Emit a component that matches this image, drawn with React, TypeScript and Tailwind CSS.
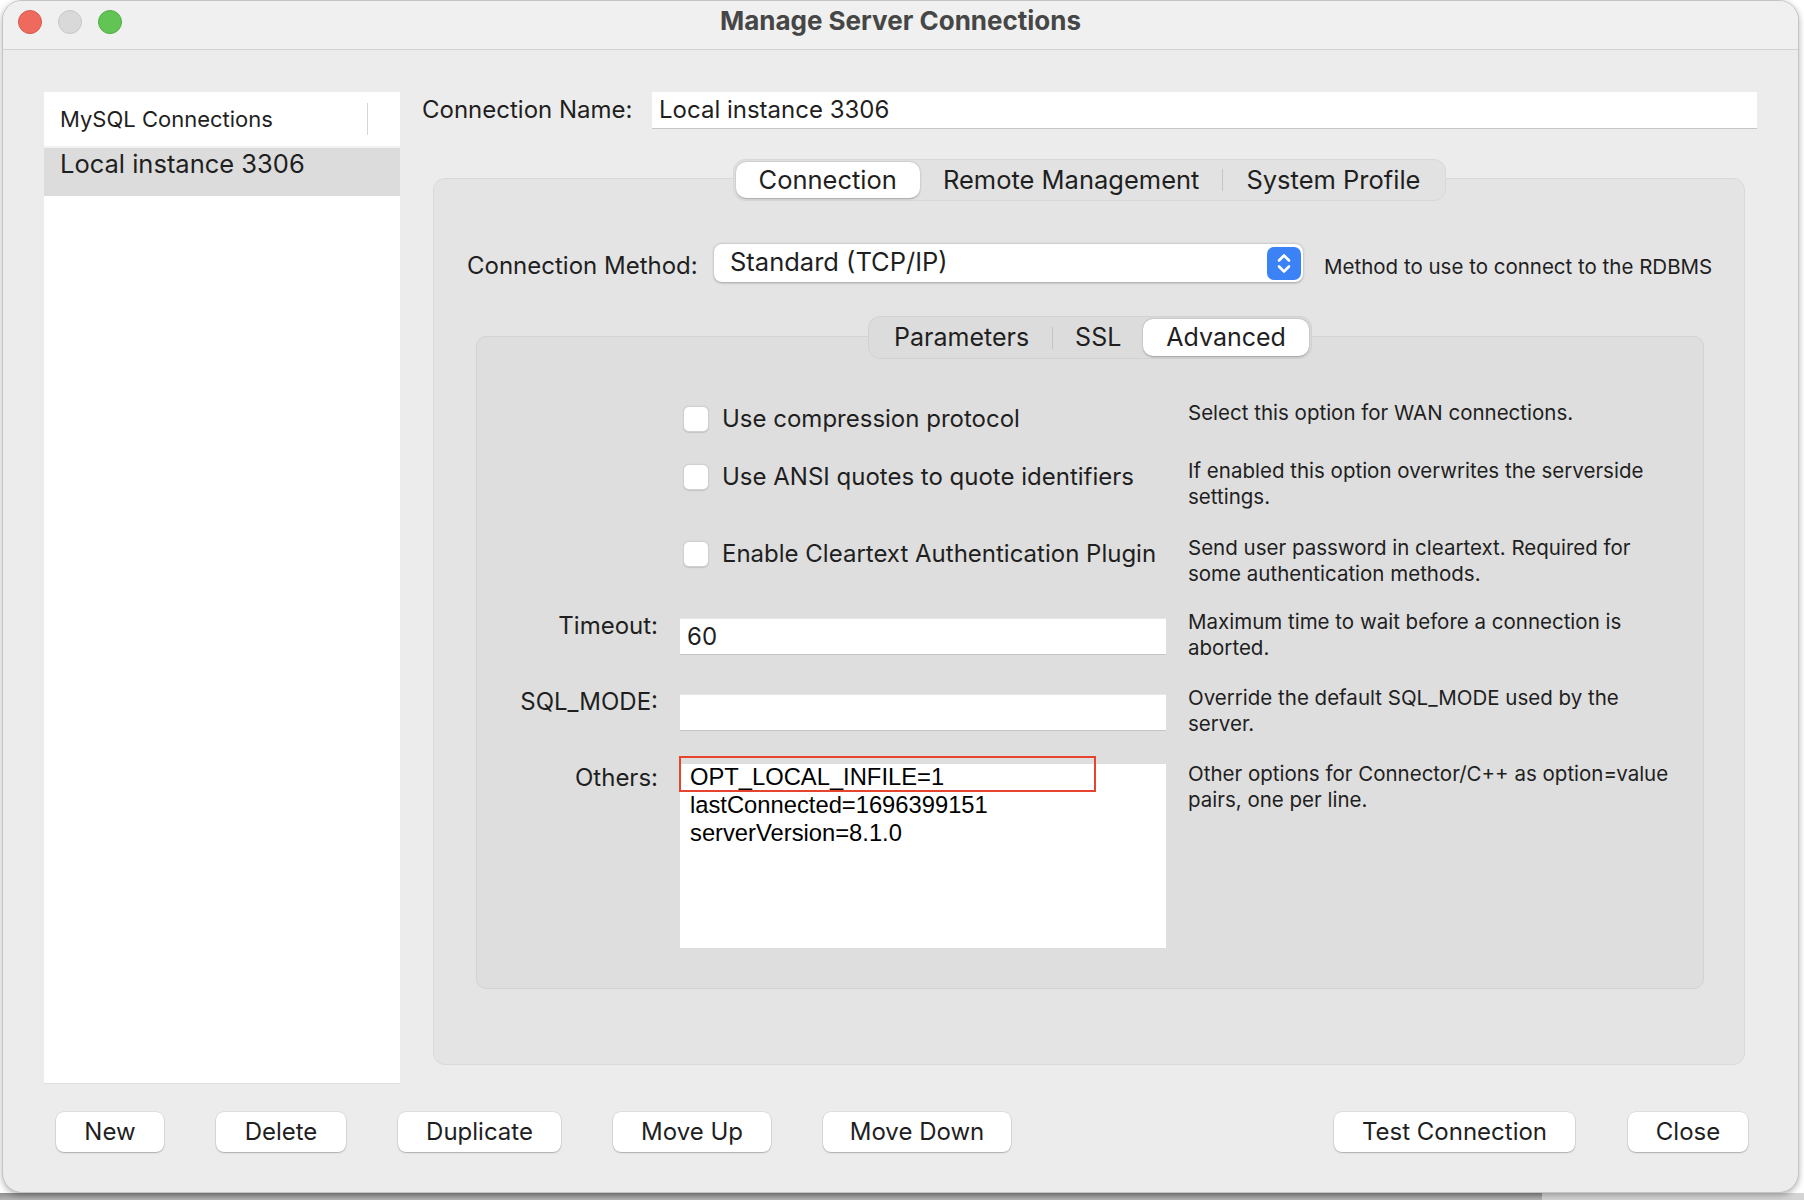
import React from "react";

function Checkbox() {
  return (
    <span className="ml-[3px] w-[26px] h-[26px] shrink-0 rounded-[6px] bg-white border border-[#d0d0d0] shadow-[0_0.5px_1px_rgba(0,0,0,0.12)]" />
  );
}

function Desc({ children, className = "" }: { children: React.ReactNode; className?: string }) {
  return (
    <div className={"text-[20.5px] leading-[26px] whitespace-nowrap text-[#1f1f1f] " + className}>
      {children}
    </div>
  );
}

function Btn({ label, w }: { label: string; w: string }) {
  return (
    <div
      className={
        "h-[40px] rounded-[8px] bg-white flex items-center justify-center text-[24px] text-[#1f1f1f] shadow-[0_1px_1.5px_rgba(0,0,0,0.22),0_0_0_0.5px_rgba(0,0,0,0.12)] " +
        w
      }
    >
      {label}
    </div>
  );
}

export default function App() {
  return (
    <div className="w-[1804px] h-[1200px] bg-white flex flex-col overflow-hidden font-[family-name:Inter,sans-serif] text-[#1f1f1f]">
      <div className="relative z-10 ml-[2px] w-[1797px] h-[1193px] shrink-0 rounded-[20px] bg-[#ececec] border border-[#c4c4c4] flex flex-col overflow-hidden shadow-[0_2px_6px_rgba(0,0,0,0.3)]">
        {/* Title bar */}
        <div className="h-[49px] shrink-0 bg-[#eff0ef] border-b border-[#d3d3d3] grid grid-cols-[1fr_auto_1fr] items-start">
          <div className="flex gap-[16px] pl-[15px] mt-[9px]">
            <span className="w-[24px] h-[24px] rounded-full bg-[#ee6a5f] border border-[#d9574c]" />
            <span className="w-[24px] h-[24px] rounded-full bg-[#d9d9d9] border border-[#c6c6c6]" />
            <span className="w-[24px] h-[24px] rounded-full bg-[#61c454] border border-[#50ad44]" />
          </div>
          <div className="mt-[5px] text-[26px] leading-[30px] font-bold text-[#464646]">
            Manage Server Connections
          </div>
          <div />
        </div>

        {/* Body */}
        <div className="flex-1 flex flex-col pt-[42px] pl-[41px]">
          <div className="flex h-[992px] shrink-0">
            {/* Sidebar */}
            <div className="w-[356px] shrink-0 bg-white border-b border-[#dedede] flex flex-col">
              <div className="h-[56px] shrink-0 flex items-center pl-[16px] border-b-2 border-[#f2f2f2]">
                <span className="text-[22px]">MySQL Connections</span>
                <span className="ml-auto mr-[32px] w-px h-[32px] bg-[#d6d6d6]" />
              </div>
              <div className="h-[48px] shrink-0 bg-[#dcdcdc] pl-[16px] text-[25.5px] leading-[32px]">
                Local instance 3306
              </div>
            </div>

            {/* Right panel */}
            <div className="ml-[22px] w-[1335px] flex flex-col">
              <div className="flex items-center h-[38px] -mt-[1px] shrink-0">
                <div className="w-[230px] shrink-0 text-[24px]">Connection Name:</div>
                <div className="flex-1 h-[38px] bg-white border-b border-[#c6c6c6] border-t border-t-[#ececec] flex items-center pl-[7px] text-[24px]">
                  Local instance 3306
                </div>
              </div>

              <div className="mt-[30px] flex flex-col items-center">
                {/* Outer tabs */}
                <div className="relative z-10 h-[42px] p-[2px] flex items-center rounded-[12px] bg-[#e2e2e2] border border-[#d8d8d8]">
                  <div className="h-full px-[23px] flex items-center rounded-[10px] bg-white shadow-[0_0.5px_2px_rgba(0,0,0,0.3)] text-[25.5px]">
                    Connection
                  </div>
                  <div className="px-[23px] text-[25.5px]">Remote Management</div>
                  <div className="w-px h-[22px] bg-[#c6c6c6]" />
                  <div className="px-[23px] text-[25.5px]">System Profile</div>
                </div>

                {/* Outer box */}
                <div className="-mt-[23px] self-stretch ml-[11px] mr-[12px] h-[887px] rounded-[12px] bg-[#e4e4e4] border border-[#d9d9d9] pt-[65px] flex flex-col">
                  <div className="flex items-start h-[38px] pl-[33px] shrink-0">
                    <div className="w-[247px] shrink-0 text-[24px] leading-[28px] mt-[8px]">Connection Method:</div>
                    <div className="w-[589px] h-[38px] shrink-0 rounded-[8px] bg-white shadow-[0_0.5px_2.5px_rgba(0,0,0,0.3)] flex items-center pl-[16px] pr-[2px]">
                      <span className="flex-1 text-[25.5px] leading-[30px] -mt-[3px]">Standard (TCP/IP)</span>
                      <div className="w-[34px] h-[33px] rounded-[7px] bg-[#3a82f6] flex items-center justify-center">
                        <svg width="34" height="33" viewBox="0 0 34 33" fill="none">
                          <path d="M12 13.5 L17 8.5 L22 13.5" stroke="white" strokeWidth="2.6" strokeLinecap="round" strokeLinejoin="round" />
                          <path d="M12 19.5 L17 24.5 L22 19.5" stroke="white" strokeWidth="2.6" strokeLinecap="round" strokeLinejoin="round" />
                        </svg>
                      </div>
                    </div>
                    <Desc className="ml-[21px] mt-[10px]">Method to use to connect to the RDBMS</Desc>
                  </div>

                  <div className="mt-[34px] ml-[42px] mr-[40px] flex flex-col items-center">
                    {/* Inner tabs */}
                    <div className="relative z-10 h-[43px] p-[2px] flex items-center rounded-[12px] bg-[#dcdcdc] border border-[#d2d2d2]">
                      <div className="px-[23px] text-[25px]">Parameters</div>
                      <div className="w-px h-[22px] bg-[#c4c4c4]" />
                      <div className="px-[22px] text-[25px]">SSL</div>
                      <div className="h-full px-[23px] flex items-center rounded-[10px] bg-white shadow-[0_0.5px_2px_rgba(0,0,0,0.3)] text-[25px]">
                        Advanced
                      </div>
                    </div>

                    {/* Inner box */}
                    <div className="-mt-[23px] self-stretch h-[653px] rounded-[10px] bg-[#dedede] border border-[#d3d3d3] pt-[63px] flex flex-col">
                      <div className="grid grid-cols-[181px_486px_1fr] gap-x-[22px] h-[58px] items-start shrink-0">
                        <div />
                        <div className="mt-[4px] h-[30px] flex items-center gap-[13px]">
                          <Checkbox />
                          <span className="text-[24px] whitespace-nowrap">Use compression protocol</span>
                        </div>
                        <Desc>Select this option for WAN connections.</Desc>
                      </div>

                      <div className="grid grid-cols-[181px_486px_1fr] gap-x-[22px] h-[77px] items-start shrink-0">
                        <div />
                        <div className="mt-[4px] h-[30px] flex items-center gap-[13px]">
                          <Checkbox />
                          <span className="text-[24px] whitespace-nowrap">Use ANSI quotes to quote identifiers</span>
                        </div>
                        <Desc>
                          If enabled this option overwrites the serverside
                          <br />
                          settings.
                        </Desc>
                      </div>

                      <div className="grid grid-cols-[181px_486px_1fr] gap-x-[22px] h-[74px] items-start shrink-0">
                        <div />
                        <div className="mt-[4px] h-[30px] flex items-center gap-[13px]">
                          <Checkbox />
                          <span className="text-[24px] whitespace-nowrap">Enable Cleartext Authentication Plugin</span>
                        </div>
                        <Desc>
                          Send user password in cleartext. Required for
                          <br />
                          some authentication methods.
                        </Desc>
                      </div>

                      <div className="grid grid-cols-[181px_486px_1fr] gap-x-[22px] h-[76px] items-start shrink-0">
                        <div className="mt-[3px] text-right text-[24px] leading-[28px]">Timeout:</div>
                        <div className="mt-[9px] h-[37px] bg-white border-b border-[#c4c4c4] border-t border-t-[#e6e6e6] flex items-center pl-[7px] text-[24px]">
                          60
                        </div>
                        <Desc>
                          Maximum time to wait before a connection is
                          <br />
                          aborted.
                        </Desc>
                      </div>

                      <div className="grid grid-cols-[181px_486px_1fr] gap-x-[22px] h-[76px] items-start shrink-0">
                        <div className="mt-[3px] text-right text-[24px] leading-[28px]">SQL_MODE:</div>
                        <div className="mt-[9px] h-[37px] bg-white border-b border-[#c4c4c4] border-t border-t-[#e6e6e6]" />
                        <Desc>
                          Override the default SQL_MODE used by the
                          <br />
                          server.
                        </Desc>
                      </div>

                      <div className="grid grid-cols-[181px_486px_1fr] gap-x-[22px] h-[187px] items-start shrink-0">
                        <div className="mt-[3px] text-right text-[24px] leading-[28px]">Others:</div>
                        <div className="relative mt-[3px] h-[184px] bg-white pl-[10px] font-[family-name:'Liberation_Sans',Arial,sans-serif] text-[23.75px] leading-[28px] text-black">
                          <div className="-mt-[1px]">
                            <div>OPT_LOCAL_INFILE=1</div>
                            <div>lastConnected=1696399151</div>
                            <div>serverVersion=8.1.0</div>
                          </div>
                          <div className="absolute -left-[1px] -top-[8px] w-[417px] h-[36px] border-[2.5px] border-[#e6442f]" />
                        </div>
                        <Desc>
                          Other options for Connector/C++ as option=value
                          <br />
                          pairs, one per line.
                        </Desc>
                      </div>
                    </div>
                  </div>
                </div>
              </div>
            </div>
          </div>

          {/* Buttons */}
          <div className="mt-[28px] h-[40px] flex items-center pl-[12px] pr-[50px] shrink-0">
            <div className="flex gap-[52px]">
              <Btn label="New" w="w-[108px]" />
              <Btn label="Delete" w="w-[130px]" />
              <Btn label="Duplicate" w="w-[163px]" />
              <Btn label="Move Up" w="w-[158px]" />
              <Btn label="Move Down" w="w-[188px]" />
            </div>
            <div className="ml-auto flex gap-[53px]">
              <Btn label="Test Connection" w="w-[241px]" />
              <Btn label="Close" w="w-[120px]" />
            </div>
          </div>
        </div>
      </div>
      <div className="flex-1 flex">
        <div className="w-[1542px] bg-gradient-to-b from-[#8f8f8f] to-[#b5b5b5]" />
        <div className="flex-1 bg-[#d4d4d4]" />
      </div>
    </div>
  );
}
